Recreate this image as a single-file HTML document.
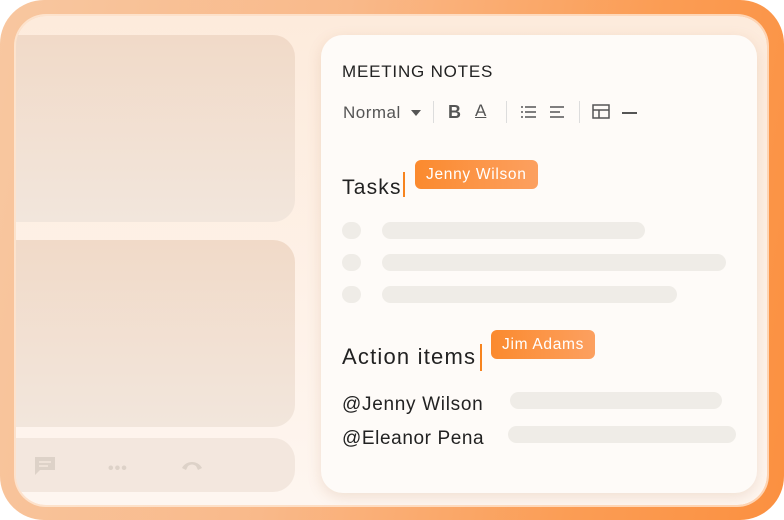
<!DOCTYPE html>
<html><head><style>
*{margin:0;padding:0;box-sizing:border-box}
body{width:784px;height:520px;background:#fff;position:relative;overflow:hidden;font-family:"Liberation Sans",sans-serif}
.outer{position:absolute;left:0;top:0;width:784px;height:520px;border-radius:44px;background:linear-gradient(100deg,#f8c7a0 0%,#f9b98a 40%,#fb9d55 75%,#fb9040 100%)}
.inner{position:absolute;left:16px;top:16px;width:751px;height:489px;border-radius:30px;background:linear-gradient(180deg,#fdebdc,#fef6f0);overflow:hidden;box-shadow:0 0 0 2px rgba(255,240,225,.7)}
.lp{position:absolute;left:0;width:279px;border-radius:0 22px 22px 0;background:linear-gradient(180deg,#f1dac8,#f2e6dc)}
.card{position:absolute;left:305px;top:19px;width:436px;height:458px;border-radius:22px;background:#fefbf8;box-shadow:0 4px 14px rgba(180,120,80,.18)}
.t{position:absolute;color:#222;white-space:nowrap}
.bar{position:absolute;height:17px;border-radius:9px;background:#efece7}
.dot{position:absolute;width:19px;height:17px;border-radius:9px;background:#efece7}
.tag{position:absolute;height:29px;border-radius:6px;background:linear-gradient(90deg,#fb8a2e,#fca060);color:#fff;font-size:15.5px;line-height:29px;padding:0 11px;letter-spacing:.7px}
.cur{position:absolute;width:2px;background:#f7841f}
</style></head><body>
<div class="outer"></div>
<div class="inner">
 <div class="lp" style="top:19px;height:187px"></div>
 <div class="lp" style="top:224px;height:187px"></div>
 <div class="lp" style="top:422px;height:54px;background:#f3e7de"></div>
 <svg style="position:absolute;left:18px;top:440px" width="22" height="20" viewBox="0 0 22 20"><path d="M1 1h20v13H6l-5 5z" fill="#ddd2c8"/><path d="M5 6h12M5 10h9" stroke="#f3e7de" stroke-width="1.5"/></svg>
 <div style="position:absolute;left:92px;top:444px;color:#ddd2c8;font-size:16px;letter-spacing:1px;font-weight:bold">•••</div>
 <svg style="position:absolute;left:165px;top:443px" width="22" height="12" viewBox="0 0 22 12"><path d="M1 9C5 1 17 1 21 9L17 11 15 7C12 5 10 5 7 7L5 11z" fill="#ddd2c8"/></svg>
 <div class="card">
  <div class="t" style="left:21px;top:27px;font-size:17px;letter-spacing:.8px">MEETING NOTES</div>
  <div class="t" style="left:22px;top:68px;font-size:17px;color:#555;letter-spacing:.5px">Normal</div>
  <svg style="position:absolute;left:90px;top:75px" width="10" height="6"><path d="M0 0h10L5 6z" fill="#555"/></svg>
  <div style="position:absolute;left:112px;top:66px;width:1px;height:22px;background:#ddd"></div>
  <div class="t" style="left:127px;top:67px;font-size:18px;font-weight:bold;color:#555">B</div>
  <div class="t" style="left:154px;top:66px;font-size:17px;color:#555;text-decoration:underline">A</div>
  <div style="position:absolute;left:185px;top:66px;width:1px;height:22px;background:#ddd"></div>
  <svg style="position:absolute;left:199px;top:70px" width="16" height="14" stroke="#555" stroke-width="1.5"><path d="M5 2h11M5 7h11M5 12h11M1 2h2M1 7h2M1 12h2"/></svg>
  <svg style="position:absolute;left:228px;top:70px" width="16" height="14" stroke="#555" stroke-width="1.5"><path d="M1 2h14M1 7h10M1 12h14"/></svg>
  <div style="position:absolute;left:258px;top:66px;width:1px;height:22px;background:#ddd"></div>
  <svg style="position:absolute;left:271px;top:69px" width="18" height="16" fill="none" stroke="#555" stroke-width="1.5"><rect x="1" y="1" width="16" height="13"/><path d="M1 6h16M7 6v8"/></svg>
  <div style="position:absolute;left:301px;top:77px;width:15px;height:1.5px;background:#555"></div>
  <div class="t" style="left:21px;top:141px;font-size:21px;letter-spacing:1.2px">Tasks</div>
  <div class="cur" style="left:82px;top:137px;height:25px"></div>
  <div class="tag" style="left:94px;top:125px">Jenny Wilson</div>
  <div class="dot" style="left:21px;top:187px"></div><div class="bar" style="left:61px;top:187px;width:263px"></div>
  <div class="dot" style="left:21px;top:219px"></div><div class="bar" style="left:61px;top:219px;width:344px"></div>
  <div class="dot" style="left:21px;top:251px"></div><div class="bar" style="left:61px;top:251px;width:295px"></div>
  <div class="t" style="left:21px;top:309px;font-size:22px;letter-spacing:1.2px">Action items</div>
  <div class="cur" style="left:159px;top:309px;height:27px"></div>
  <div class="tag" style="left:170px;top:295px">Jim Adams</div>
  <div class="t" style="left:21px;top:359px;font-size:19px;letter-spacing:.7px">@Jenny Wilson</div>
  <div class="bar" style="left:189px;top:357px;width:212px"></div>
  <div class="t" style="left:21px;top:393px;font-size:19px;letter-spacing:.6px">@Eleanor Pena</div>
  <div class="bar" style="left:187px;top:391px;width:228px"></div>
 </div>
</div>
</body></html>
